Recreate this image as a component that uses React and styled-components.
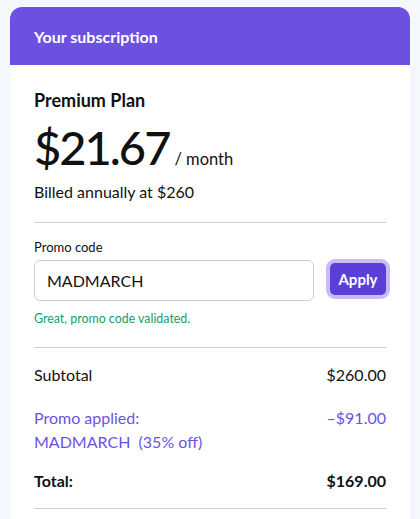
import React from "react";
import styled, { createGlobalStyle } from "styled-components";

const GlobalStyle = createGlobalStyle`
  html, body {
    margin: 0;
    padding: 0;
    background: #f4f8fc;
    font-family: "Lato", "Inter", sans-serif;
    color: #111111;
  }
`;

const App = () => {
  return (
    <>
      <GlobalStyle />
      <Page>
        <Card>
          <CardHeader>Your subscription</CardHeader>
          <CardBody>
            <PlanName>Premium Plan</PlanName>
            <PriceLine>
              <Price>$21.67</Price>
              <Period>/ month</Period>
            </PriceLine>
            <Billed>Billed annually at $260</Billed>
            <Divider />
            <Label htmlFor="promo">Promo code</Label>
            <PromoRow>
              <PromoInput id="promo" defaultValue="MADMARCH" />
              <ApplyButton type="button">Apply</ApplyButton>
            </PromoRow>
            <Success>Great, promo code validated.</Success>
            <Divider $top={19} />
            <Summary>
              <Row>
                <span>Subtotal</span>
                <span>$260.00</span>
              </Row>
              <Row $accent $gap={20}>
                <span>
                  Promo applied:
                  <br />
                  MADMARCH&nbsp; (35% off)
                </span>
                <span>–$91.00</span>
              </Row>
              <Row $bold $gap={16}>
                <span>Total:</span>
                <span>$169.00</span>
              </Row>
            </Summary>
            <Divider $top={16} />
          </CardBody>
        </Card>
      </Page>
    </>
  );
};

const Page = styled.div`
  padding: 7px 10px 0;
`;

const Card = styled.div`
  background: #ffffff;
  border-radius: 12px 12px 0 0;
  overflow: hidden;
  min-height: 512px;
`;

const CardHeader = styled.div`
  display: flex;
  align-items: center;
  height: 58px;
  padding: 0 24px;
  background: #6c50e0;
  color: #ffffff;
  font-size: 16px;
  font-weight: 700;
`;

const CardBody = styled.div`
  display: flex;
  flex-direction: column;
  padding: 23px 24px 0;
`;

const PlanName = styled.div`
  font-size: 18px;
  line-height: 24px;
  font-weight: 700;
`;

const PriceLine = styled.div`
  display: flex;
  align-items: baseline;
  gap: 5px;
  margin-top: 7px;
`;

const Price = styled.span`
  font-size: 47px;
  line-height: 56px;
  font-weight: 500;
  letter-spacing: -2px;
`;

const Period = styled.span`
  font-size: 16.5px;
`;

const Billed = styled.div`
  margin-top: 6px;
  font-size: 16px;
  line-height: 22px;
`;

const Divider = styled.hr`
  width: 100%;
  margin: ${(p) => p.$top ?? 19}px 0 0;
  border: 0;
  border-top: 1px solid #ccd1d9;
`;

const Label = styled.label`
  margin-top: 15px;
  font-size: 13px;
  line-height: 18px;
`;

const PromoRow = styled.div`
  display: flex;
  align-items: center;
  gap: 16px;
  margin-top: 4px;
`;

const PromoInput = styled.input`
  flex: 1;
  min-width: 0;
  height: 41px;
  box-sizing: border-box;
  padding: 0 12px;
  border: 1px solid #c9ced6;
  border-radius: 6px;
  font-family: inherit;
  font-size: 16px;
  color: #111111;
  outline: none;
`;

const ApplyButton = styled.button`
  width: 56px;
  height: 32px;
  margin-top: -3px;
  border: 0;
  border-radius: 5px;
  background: #5b3fd9;
  box-shadow: 0 0 0 4px #cbbaf7;
  color: #ffffff;
  font-family: inherit;
  font-size: 15px;
  font-weight: 700;
  cursor: pointer;
`;

const Success = styled.div`
  margin-top: 9px;
  font-size: 12.4px;
  line-height: 18px;
  color: #15a06b;
`;

const Summary = styled.div`
  display: flex;
  flex-direction: column;
  padding-top: 16px;
`;

const Row = styled.div`
  display: flex;
  justify-content: space-between;
  align-items: flex-start;
  margin-top: ${(p) => p.$gap ?? 0}px;
  font-size: 16px;
  line-height: ${(p) => (p.$accent ? 24 : 22)}px;
  font-weight: ${(p) => (p.$bold ? 700 : 400)};
  color: ${(p) => (p.$accent ? "#6c52e3" : "#111111")};
`;

export default App;
